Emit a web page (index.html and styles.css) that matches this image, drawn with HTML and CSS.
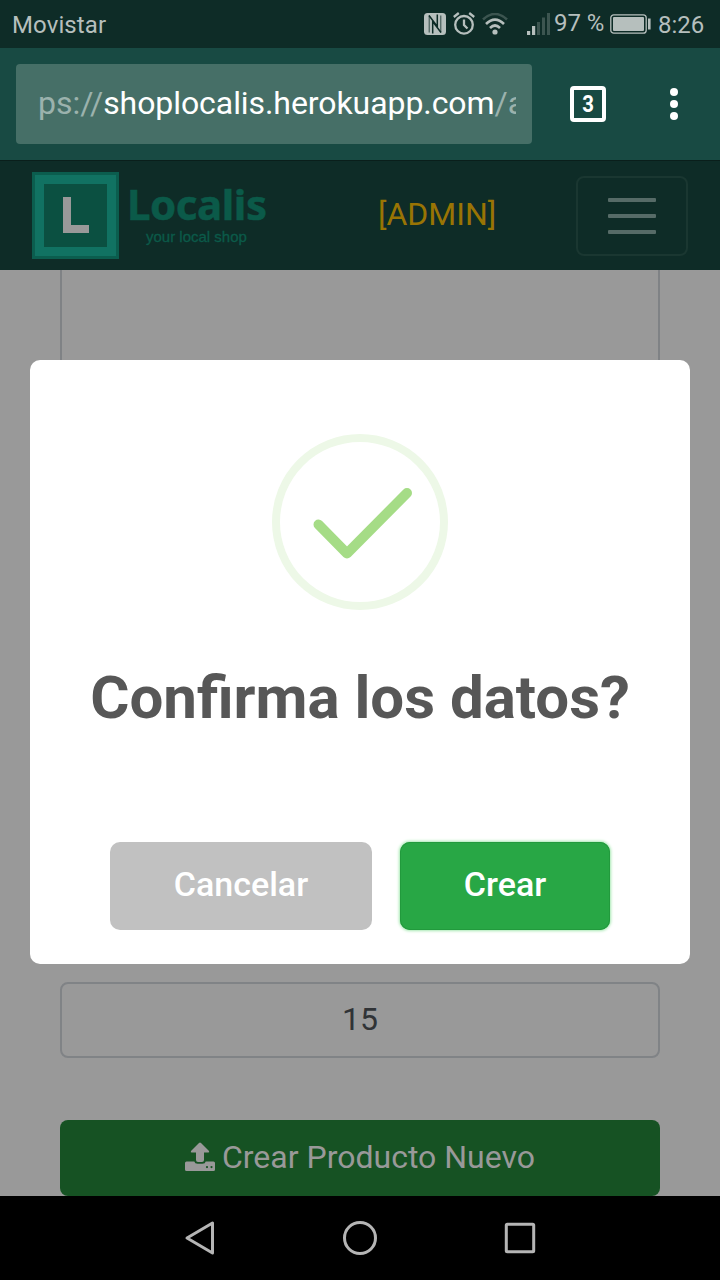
FILE: index.html
```html
<!DOCTYPE html>
<html lang="es">
<head>
<meta charset="utf-8">
<title>Localis</title>
<link rel="stylesheet" href="styles.css">
</head>
<body>
<div class="phone">
  <header class="status">
    <span class="carrier">Movistar</span>
    <div class="status-icons">
      <svg class="ic-nfc" width="22" height="22" viewBox="0 0 22 22"><rect width="22" height="22" rx="3.500" fill="#b6bfbd"/><path d="M5 2.500L13.300 13.500V1.500M17 19.500L8.700 8.500v12" fill="none" stroke="#0e2c27" stroke-width="1.500"/><path d="M5.200 2.500v17M16.800 2.500v17" stroke="#0e2c27" stroke-width=".8"/></svg>
      <svg class="ic-alarm" width="22" height="23" viewBox="0 0 22 23" fill="none" stroke="#b6bfbd" stroke-width="2.300"><circle cx="11" cy="12.800" r="8.800"/><path d="M11 7.500v5.500l3.500 3.500M.8 5l5-4M21.200 5l-5-4"/></svg>
      <svg class="ic-wifi" width="26" height="22" viewBox="0 0 26 22" fill="none" stroke-width="2.600"><path d="M1 6.500Q13-4.500 25 6.500" stroke="#3c5550"/><path d="M4 11Q13 2 22 11M8 15Q13 10 18 15" stroke="#b6bfbd"/><circle cx="13" cy="19" r="2.600" fill="#b6bfbd"/></svg>
      <svg class="ic-signal" width="23" height="22" viewBox="0 0 23 22"><path d="M0 18h3.200v4H0zM5 13h3.200v9H5z" fill="#b6bfbd"/><path d="M10 9h3v13h-3zM15 4.500h3V22h-3zM20 0h3v22h-3z" fill="#3c5550"/></svg>
      <span class="percent">97 %</span>
      <svg class="ic-battery" width="41" height="20" viewBox="0 0 41 20"><rect x=".8" y=".8" width="35.400" height="18.400" rx="3" fill="none" stroke="#b6bfbd" stroke-width="1.300"/><rect x="3" y="3" width="31" height="14" rx="1" fill="#b6bfbd"/><path d="M38 4.500h2.600v11H38z" fill="#b6bfbd"/></svg>
      <span class="clock">8:26</span>
    </div>
  </header>

  <div class="browser-bar">
    <div class="url"><div class="url-clip"><span class="faint scheme">ps://</span><span class="host">shoplocalis.herokuapp.com</span><span class="faint">/a</span></div></div>
    <div class="tabs"><span>3</span></div>
    <div class="dots"><i></i><i></i><i></i></div>
  </div>

  <main class="page">
    <nav class="navbar">
      <div class="brand">
        <div class="brand-mark"><svg width="26" height="36" viewBox="0 0 26 36"><path d="M0 0h8v28h18v8H0z" fill="#999"/></svg></div>
        <div class="brand-text"><span class="brand-name">Localis</span><span class="brand-tag">your local shop</span></div>
      </div>
      <span class="admin">[ADMIN]</span>
      <div class="toggler"><i></i><i></i><i></i></div>
    </nav>
    <div class="form">
      <div class="preview"></div>
      <div class="field">15</div>
      <div class="submit">
        <svg width="30" height="30" viewBox="0 0 30 30" fill="#999"><path fill-rule="evenodd" d="M15 .4Q15.500.4 16 1L24 9q.8 1.500-.8 1.500H19V18q0 2-2 2h-4q-2 0-2-2v-7.500H6.800Q5.200 10.500 6 9l8-8Q14.500.4 15 .4zM1.500 19.500H9.300q.5 2.200 3.200 2.200h5q2.700 0 3.200-2.200h7.800q1.500 0 1.500 1.500v6.500q0 1.500-1.500 1.500h-27Q0 29 0 27.500V21q0-1.500 1.500-1.500zM22 24a1.100 1.100 0 1 0 0 2.200A1.100 1.100 0 0 0 22 24zm4.500 0a1.100 1.100 0 1 0 0 2.200A1.100 1.100 0 0 0 26.500 24z"/></svg>
        <span>Crear Producto Nuevo</span>
      </div>
    </div>

    <section class="modal">
      <svg class="check" width="176" height="176" viewBox="0 0 176 176" fill="none"><circle cx="88" cy="88" r="84" stroke="#edf8e7" stroke-width="8"/><path d="M46.500 90.500L75 119.500L135 59" stroke="#a5dc86" stroke-width="10" stroke-linecap="round" stroke-linejoin="round"/></svg>
      <h1 class="title">Confirma los datos?</h1>
      <div class="actions">
        <button class="btn cancel">Cancelar</button>
        <button class="btn create">Crear</button>
      </div>
    </section>
  </main>

  <footer class="softkeys">
    <svg width="32" height="36" viewBox="0 0 32 36"><path d="M28.500 3v30L3 18z"/></svg>
    <svg width="36" height="36" viewBox="0 0 36 36"><circle cx="18" cy="18" r="15.500"/></svg>
    <svg width="32" height="32" viewBox="0 0 32 32"><rect x="2.300" y="2.300" width="27.400" height="27.400" rx="1"/></svg>
  </footer>
</div>
</body>
</html>
```
FILE: styles.css
```css
* { box-sizing: border-box; }
body { margin: 0; font-family: Roboto, "Liberation Sans", sans-serif; white-space: nowrap; }
svg { display: block; flex: none; }
.phone { width: 720px; height: 1280px; display: flex; flex-direction: column; overflow: hidden; }

.status { height: 48px; flex: none; background: #0e2c27; color: #b6bfbd; display: flex; justify-content: space-between; padding: 0 15px 0 12px; font-size: 24px; }
.carrier { line-height: 50px; letter-spacing: .1px; }
.status-icons { display: flex; align-items: flex-start; }
.ic-nfc { margin: 13px 7px 0 0; }
.ic-alarm { margin: 12px 7px 0 0; }
.ic-wifi { margin: 13px 19px 0 0; }
.ic-signal { margin: 13px 4px 0 0; }
.percent { width: 50px; margin-right: 6px; line-height: 46px; letter-spacing: -.1px; }
.ic-battery { margin: 14px 7px 0 0; }
.clock { width: 47px; line-height: 50px; }

.browser-bar { height: 112px; flex: none; background: #184a43; display: flex; align-items: center; padding-left: 16px; }
.url { width: 516px; height: 80px; border-radius: 4px; background: #466f67; padding: 0 16px 0 22px; }
.url-clip { overflow: hidden; font-size: 32px; line-height: 79px; color: #fff; }
.host { letter-spacing: -.07px; }
.faint { color: #9bb2ad; }
.tabs { width: 36px; height: 36px; margin-left: 38px; border: 4px solid #fff; border-radius: 4px; color: #fff; font-size: 24px; font-weight: 700; line-height: 28px; text-align: center; }
.tabs span { display: block; transform: scaleX(.85); }
.dots { margin-left: 64px; display: grid; gap: 4px; }
.dots i { width: 8px; height: 8px; border-radius: 50%; background: #fff; }

.page { height: 1036px; flex: none; position: relative; background: #999; }
.navbar { height: 110px; background: #0e2c27; border-top: 1px solid #0a1f1b; display: flex; align-items: center; padding: 0 32px; }
.brand { display: flex; width: 346px; }
.brand-mark { width: 87px; height: 87px; border: 3px solid #0b5d4e; outline: 9px solid #117262; outline-offset: -12px; background: #0b5041; display: flex; align-items: center; justify-content: center; padding: 0 0 2px 0; }
.brand-text { margin-left: 8px; width: 141px; display: flex; flex-direction: column; color: #0b5a49; }
.brand-name { font: 700 42px/48px "Noto Sans", sans-serif; margin-top: 8px; letter-spacing: -.45px; -webkit-text-stroke: .5px #0b5a49; }
.brand-tag { font: 15px/18px "Liberation Sans", sans-serif; margin: 0 0 0 19px; -webkit-text-stroke: .3px #0b5a49; }
.admin { width: 198px; color: #997404; font-size: 32px; padding-bottom: 3px; }
.toggler { width: 112px; height: 80px; border: 2px solid #1a3731; border-radius: 8px; display: grid; align-content: center; justify-content: center; gap: 12px; }
.toggler i { width: 48px; height: 4px; border-radius: 1px; background: #566b67; }
.form { padding: 0 60px; }
.preview { height: 660px; border: solid #7f8285; border-width: 0 2px 2px; border-radius: 0 0 8px 8px; }
.field { height: 76px; margin-top: 52px; border: 2px solid #808386; border-radius: 8px; text-align: center; font-size: 32px; line-height: 71px; color: #303336; }
.submit { height: 76px; margin-top: 62px; border-radius: 8px; background: #165223; color: #999; font-size: 32px; line-height: 72px; display: flex; align-items: center; justify-content: center; gap: 7px; padding-bottom: 3px; }

.modal { position: absolute; left: 30px; top: 200px; width: 660px; height: 604px; background: #fff; border-radius: 10px; display: flex; flex-direction: column; align-items: center; padding-top: 74px; }
.title { margin: 51px 0 0; height: 74px; line-height: 74px; font-size: 60px; font-weight: 700; color: #575757; }
.actions { display: flex; gap: 28px; margin-top: 107px; }
.btn { height: 88px; border: 0; border-radius: 10px; color: #fff; font: 500 34px/84px Roboto, sans-serif; padding: 0 0 4px; }
.cancel { width: 262px; background: #c1c1c1; }
.create { width: 210px; background: #28a745; box-shadow: inset 0 0 0 1px #229a3d, 0 0 3px 1px #a5e8b0; }

.softkeys { height: 84px; flex: none; background: #000; display: flex; align-items: center; justify-content: space-between; padding: 0 184px; }
.softkeys svg { fill: none; stroke: #b5b5b5; stroke-width: 3; stroke-linejoin: round; }
```
